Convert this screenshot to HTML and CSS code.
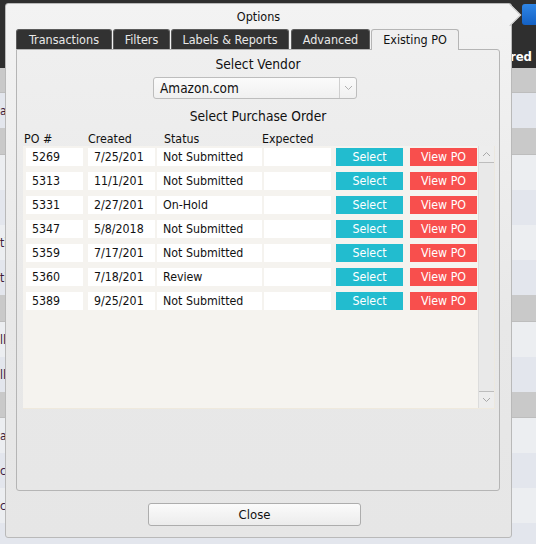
FILE: index.html
```html
<!DOCTYPE html>
<html>
<head>
<meta charset="utf-8">
<link rel="stylesheet" href="styles.css">
</head>
<body>
<div class="app">
  <div class="hdr">
    <div class="hdr-top"><span class="blue-btn"></span></div>
    <div class="hdr-label">Ordered</div>
  </div>
  <div class="band" style="height:25px"></div>
  <div class="row r1" style="height:35px"><span class="cut">a</span></div>
  <div class="band" style="height:27px"></div>
  <div class="row r2" style="height:35px"></div>
  <div class="row r1" style="height:35px"></div>
  <div class="row r2" style="height:35px"><span class="cut">ti</span></div>
  <div class="row r1" style="height:35px"><span class="cut">ti</span></div>
  <div class="band" style="height:27px"></div>
  <div class="row r2" style="height:35px"><span class="cut">ll</span></div>
  <div class="row r1" style="height:35px"><span class="cut">ll</span></div>
  <div class="band" style="height:26px"></div>
  <div class="row r2" style="height:35px"><span class="cut">at</span></div>
  <div class="row r1" style="height:35px"><span class="cut">c</span></div>
  <div class="row r2" style="height:35px"><span class="cut">c</span></div>
  <div class="row r1" style="height:21px"></div>
</div>

<div class="dialog">
  <div class="arrow"></div>
  <div class="title">Options</div>
  <div class="tabs">
    <div class="tab" style="width:96px">Transactions</div>
    <div class="tab" style="width:57px">Filters</div>
    <div class="tab" style="width:118px;margin-right:2px">Labels &amp; Reports</div>
    <div class="tab" style="width:79px">Advanced</div>
    <div class="tab active" style="width:88px">Existing PO</div>
  </div>
  <div class="panel">
    <div class="heading h-vendor">Select Vendor</div>
    <div class="select">
      <span class="select-text">Amazon.com</span>
      <span class="select-arrow"><svg width="9" height="6" viewBox="0 0 9 6"><polyline points="1,1 4.5,4.5 8,1" fill="none" stroke="#b0b0b0" stroke-width="1"/></svg></span>
    </div>
    <div class="heading h-po">Select Purchase Order</div>
    <div class="thead">
      <span class="th-po">PO #</span>
      <span class="th-created">Created</span>
      <span class="th-status">Status</span>
      <span class="th-exp">Expected</span>
    </div>
    <div class="tbox">
      <div class="list">
        <div class="trow"><span class="cell c-po">5269</span><span class="cell c-created">7/25/201</span><span class="cell c-status">Not Submitted</span><span class="cell c-exp"></span><span class="btn b-select">Select</span><span class="btn b-view">View PO</span></div>
        <div class="trow"><span class="cell c-po">5313</span><span class="cell c-created">11/1/201</span><span class="cell c-status">Not Submitted</span><span class="cell c-exp"></span><span class="btn b-select">Select</span><span class="btn b-view">View PO</span></div>
        <div class="trow"><span class="cell c-po">5331</span><span class="cell c-created">2/27/201</span><span class="cell c-status">On-Hold</span><span class="cell c-exp"></span><span class="btn b-select">Select</span><span class="btn b-view">View PO</span></div>
        <div class="trow"><span class="cell c-po">5347</span><span class="cell c-created">5/8/2018</span><span class="cell c-status">Not Submitted</span><span class="cell c-exp"></span><span class="btn b-select">Select</span><span class="btn b-view">View PO</span></div>
        <div class="trow"><span class="cell c-po">5359</span><span class="cell c-created">7/17/201</span><span class="cell c-status">Not Submitted</span><span class="cell c-exp"></span><span class="btn b-select">Select</span><span class="btn b-view">View PO</span></div>
        <div class="trow"><span class="cell c-po">5360</span><span class="cell c-created">7/18/201</span><span class="cell c-status">Review</span><span class="cell c-exp"></span><span class="btn b-select">Select</span><span class="btn b-view">View PO</span></div>
        <div class="trow"><span class="cell c-po">5389</span><span class="cell c-created">9/25/201</span><span class="cell c-status">Not Submitted</span><span class="cell c-exp"></span><span class="btn b-select">Select</span><span class="btn b-view">View PO</span></div>
      </div>
      <div class="scrollbar">
        <div class="sb-up"><svg width="9" height="6" viewBox="0 0 9 6"><polyline points="1,5 4.5,1.5 8,5" fill="none" stroke="#a8a8a8" stroke-width="1"/></svg></div>
        <div class="sb-track"></div>
        <div class="sb-down"><svg width="9" height="6" viewBox="0 0 9 6"><polyline points="1,1 4.5,4.5 8,1" fill="none" stroke="#a8a8a8" stroke-width="1"/></svg></div>
      </div>
    </div>
  </div>
  <div class="footer">
    <button class="close">Close</button>
  </div>
</div>
</body>
</html>
```

FILE: styles.css
```css
html, body {
  margin: 0;
  padding: 0;
}
body {
  width: 536px;
  height: 544px;
  overflow: hidden;
  position: relative;
  font-family: "DejaVu Sans Condensed", "DejaVu Sans", sans-serif;
  font-stretch: condensed;
  color: #111;
}

/* background application */
.app {
  display: flex;
  flex-direction: column;
  width: 536px;
}
.hdr {
  height: 68px;
  background: #2f2f2f;
  display: flex;
  flex-direction: column;
  justify-content: space-between;
  box-sizing: border-box;
  padding-bottom: 2px;
}
.hdr-top {
  display: flex;
  justify-content: flex-end;
  padding-top: 4px;
}
.blue-btn {
  width: 22px;
  height: 21px;
  margin-right: -8px;
  border-radius: 3px;
  background: linear-gradient(#2f86e6, #1461c4);
}
.hdr-label {
  text-align: right;
  padding-right: 4px;
  color: #fff;
  font-weight: bold;
  font-size: 13px;
  line-height: 18px;
}
.band {
  background: #c9c9c9;
  border-bottom: 1px solid #bdbdbd;
  box-sizing: border-box;
}
.row {
  display: flex;
  align-items: center;
  box-sizing: border-box;
}
.r1 { background: #e3e6ed; }
.r2 { background: #eceef1; }
.cut {
  margin-left: 0;
  font-size: 12px;
  color: #3d1a3a;
}

/* dialog */
.dialog {
  position: absolute;
  left: 5px;
  top: 3px;
  width: 507px;
  height: 535px;
  box-sizing: border-box;
  border: 1px solid #b9b9b9;
  border-radius: 3px;
  background: linear-gradient(#f3f3f3, #e8e8e8 60%, #e6e6e6);
  display: flex;
  flex-direction: column;
}
.arrow {
  position: absolute;
  left: 496px;
  top: 3px;
  width: 16px;
  height: 16px;
  transform: rotate(45deg);
  background: #f3f3f3;
  border-top: 1px solid #c4c4c4;
  border-right: 1px solid #c4c4c4;
  box-sizing: border-box;
}
.title {
  margin-top: 5px;
  height: 16px;
  line-height: 16px;
  text-align: center;
  font-size: 12.5px;
}
.tabs {
  display: flex;
  margin-top: 4px;
  padding-left: 10px;
  height: 20px;
  position: relative;
  z-index: 1;
}
.tab {
  box-sizing: border-box;
  height: 20px;
  line-height: 19px;
  text-align: center;
  font-size: 12.5px;
  color: #e8e8e8;
  background: #323232;
  border: 1px solid #5c5c5c;
  border-bottom: none;
  border-radius: 3px 3px 0 0;
  margin-right: 1px;
}
.tab.active {
  height: 21px;
  background: #efefef;
  color: #111;
  border-color: #b5b5b5;
}

.panel {
  margin-left: 10px;
  width: 484px;
  height: 442px;
  box-sizing: border-box;
  border: 1px solid #b5b5b5;
  border-radius: 0 3px 3px 3px;
  background: linear-gradient(#efefef, #e8e8e8 60%, #e7e7e7);
  display: flex;
  flex-direction: column;
}
.heading {
  text-align: center;
  font-size: 13.7px;
  line-height: 18px;
  height: 18px;
}
.h-vendor { margin-top: 5px; }
.select {
  margin-top: 4px;
  margin-left: 136px;
  width: 204px;
  height: 22px;
  box-sizing: border-box;
  border: 1px solid #bdbdbd;
  border-radius: 3px;
  background: linear-gradient(#fbfbfb, #f0f0f0);
  display: flex;
  align-items: stretch;
}
.select-text {
  flex: 1;
  padding-left: 6px;
  font-size: 13.5px;
  line-height: 20px;
}
.select-arrow {
  width: 16px;
  border-left: 1px solid #cfcfcf;
  display: flex;
  align-items: center;
  justify-content: center;
}
.h-po { margin-top: 8px; }
.thead {
  margin-top: 7px;
  height: 14px;
  line-height: 14px;
  font-size: 12.3px;
  display: flex;
  padding-left: 7px;
}
.th-po { width: 64px; }
.th-created { width: 76px; }
.th-status { width: 98px; }

.tbox {
  margin-left: 6px;
  width: 472px;
  height: 263px;
  box-sizing: border-box;
  background: #f5f3ef;
  border-right: 1px solid #ece8df;
  border-bottom: 1px solid #efe9dd;
  display: flex;
}
.list {
  flex: 1;
  padding: 2px 0 0 3px;
  display: flex;
  flex-direction: column;
  gap: 6px;
}
.trow {
  display: flex;
  height: 18px;
  font-size: 12.3px;
  line-height: 18px;
}
.cell {
  background: #fff;
  box-sizing: border-box;
  padding-left: 6px;
  white-space: nowrap;
  overflow: hidden;
}
.c-po { width: 57px; }
.c-created { width: 67px; margin-left: 5px; }
.c-status { width: 105px; margin-left: 2px; }
.c-exp { width: 67px; margin-left: 2px; }
.btn {
  width: 67px;
  text-align: center;
  color: #fff;
}
.b-select { background: #22bccf; margin-left: 5px; }
.b-view { background: #f84f4d; margin-left: 7px; }

.scrollbar {
  width: 16px;
  display: flex;
  flex-direction: column;
  background: #e9e9e9;
  border-left: 1px solid #dcdcdc;
  box-sizing: border-box;
}
.sb-up, .sb-down {
  height: 16px;
  display: flex;
  align-items: center;
  justify-content: center;
  background: #ededed;
}
.sb-up { border-bottom: 1px solid #bdbdbd; }
.sb-down { border-top: 1px solid #bdbdbd; }
.sb-track { flex: 1; }

.footer {
  margin-top: 12px;
  display: flex;
  padding-left: 142px;
}
.close {
  width: 213px;
  height: 23px;
  box-sizing: border-box;
  border: 1px solid #adadad;
  border-radius: 3px;
  background: linear-gradient(#fbfbfb, #ececec);
  font-family: "DejaVu Sans Condensed", "DejaVu Sans", sans-serif;
  font-stretch: condensed;
  font-size: 13px;
  color: #111;
  padding: 0;
}
```
